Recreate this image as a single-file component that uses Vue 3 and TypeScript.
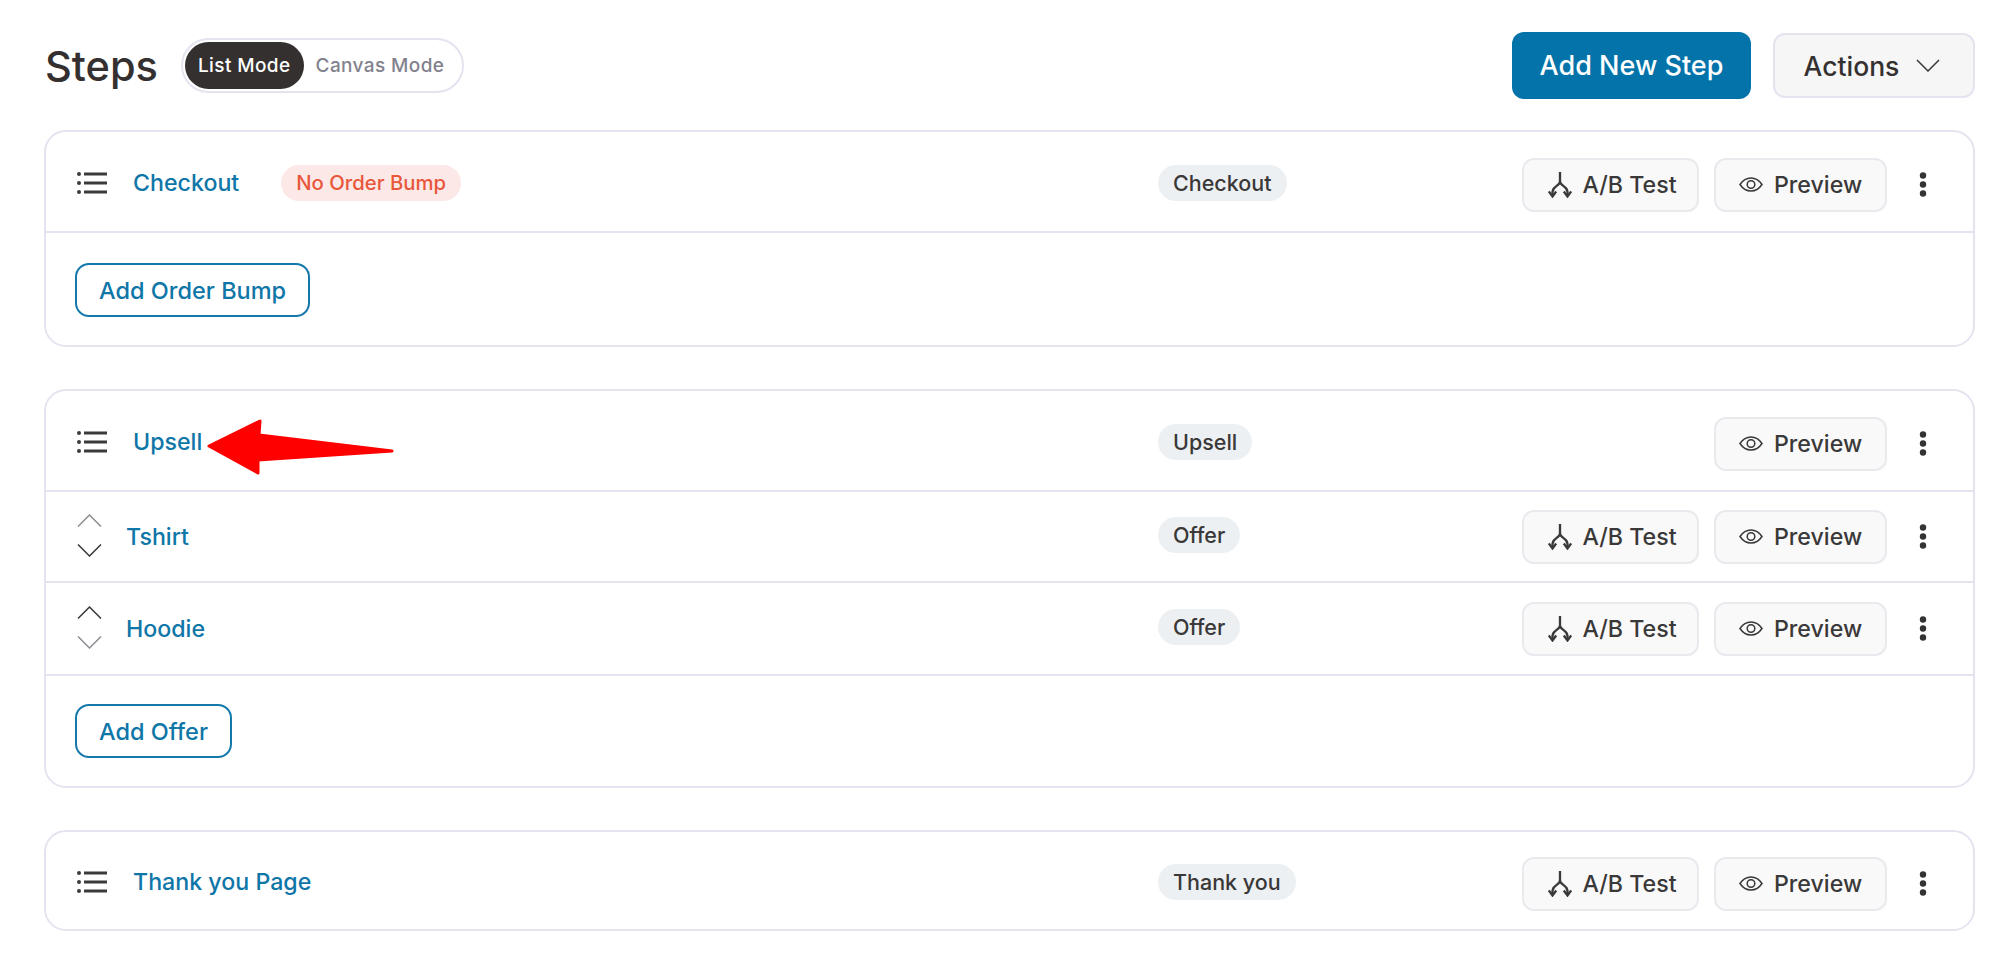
<script setup lang="ts">
interface Row {
  name: string
  type: string
  ab: boolean
  alert?: string
  up?: boolean
}
interface Card {
  head: Row
  subs: Row[]
  footer?: string
  tight?: boolean
}

const cards: Card[] = [
  {
    head: { name: 'Checkout', type: 'Checkout', ab: true, alert: 'No Order Bump' },
    subs: [],
    footer: 'Add Order Bump',
  },
  {
    head: { name: 'Upsell', type: 'Upsell', ab: false },
    subs: [
      { name: 'Tshirt', type: 'Offer', ab: true, up: false },
      { name: 'Hoodie', type: 'Offer', ab: true, up: true },
    ],
    footer: 'Add Offer',
    tight: true,
  },
  {
    head: { name: 'Thank you Page', type: 'Thank you', ab: true },
    subs: [],
  },
]
</script>

<template>
  <div class="page">
    <header class="toolbar">
      <h1 class="title">Steps</h1>
      <div class="toggle">
        <span class="mode active">List Mode</span>
        <span class="mode">Canvas Mode</span>
      </div>
      <div class="spacer"></div>
      <button class="primary">Add New Step</button>
      <button class="actions">
        Actions
        <svg class="actions-chev" viewBox="0 0 24 13" fill="none">
          <path d="M1 1l11 11L23 1" stroke="#3a3838" stroke-width="1.5" />
        </svg>
      </button>
    </header>

    <section v-for="card in cards" :key="card.head.name" class="card">
      <div class="row head" :class="{ last: !card.subs.length && !card.footer }">
        <div class="main">
          <svg class="list-icon" viewBox="0 0 30 22" fill="none">
            <circle cx="2" cy="2" r="2" fill="#3d3a3a" />
            <circle cx="2" cy="11" r="2" fill="#3d3a3a" />
            <circle cx="2" cy="20" r="2" fill="#3d3a3a" />
            <path d="M7 2h23M7 11h23M7 20h23" stroke="#3d3a3a" stroke-width="2.8" />
          </svg>
          <a class="name">{{ card.head.name }}</a>
          <span v-if="card.head.alert" class="alert">{{ card.head.alert }}</span>
        </div>
        <span class="type">{{ card.head.type }}</span>
        <div class="btns">
          <button v-if="card.head.ab" class="ghost ab">
            <svg class="ab-icon" viewBox="0 0 24 26" fill="none" stroke="#3a3838" stroke-width="2.300">
              <path d="M12 0v9.500C12 14 4.500 14 4.500 20v4M12 9.500C12 14 19.500 14 19.500 20v4" />
              <path d="M.8 19.500l3.700 5 3.700-5M15.800 19.500l3.700 5 3.700-5" />
            </svg>
            A/B Test
          </button>
          <button class="ghost pv">
            <svg class="eye" viewBox="0 0 24 15" fill="none" stroke="#3a3838" stroke-width="1.500">
              <path d="M1 7.500C4 3 8 1 12 1s8 2 11 6.500C20 12 16 14 12 14s-8-2-11-6.500z" />
              <circle cx="12" cy="7.500" r="3.800" />
            </svg>
            Preview
          </button>
          <svg class="dots" viewBox="0 0 8 25" fill="#353333">
            <circle cx="4" cy="3.500" r="3.200" />
            <circle cx="4" cy="12.500" r="3.200" />
            <circle cx="4" cy="21.500" r="3.200" />
          </svg>
        </div>
      </div>

      <div v-for="(sub, i) in card.subs" :key="sub.name" class="row sub" :class="{ second: i === 1 }">
        <div class="main">
          <div class="sort">
            <svg viewBox="0 0 25 13" fill="none" :class="{ on: sub.up }">
              <path d="M1 12.500L12.500 1 24 12.500" stroke-width="1.500" />
            </svg>
            <svg viewBox="0 0 25 13" fill="none" :class="{ on: !sub.up }">
              <path d="M1 .5L12.500 12 24 .5" stroke-width="1.500" />
            </svg>
          </div>
          <a class="name">{{ sub.name }}</a>
        </div>
        <span class="type">{{ sub.type }}</span>
        <div class="btns">
          <button class="ghost ab">
            <svg class="ab-icon" viewBox="0 0 24 26" fill="none" stroke="#3a3838" stroke-width="2.300">
              <path d="M12 0v9.500C12 14 4.500 14 4.500 20v4M12 9.500C12 14 19.500 14 19.500 20v4" />
              <path d="M.8 19.500l3.700 5 3.700-5M15.800 19.500l3.700 5 3.700-5" />
            </svg>
            A/B Test
          </button>
          <button class="ghost pv">
            <svg class="eye" viewBox="0 0 24 15" fill="none" stroke="#3a3838" stroke-width="1.500">
              <path d="M1 7.500C4 3 8 1 12 1s8 2 11 6.500C20 12 16 14 12 14s-8-2-11-6.500z" />
              <circle cx="12" cy="7.500" r="3.800" />
            </svg>
            Preview
          </button>
          <svg class="dots" viewBox="0 0 8 25" fill="#353333">
            <circle cx="4" cy="3.500" r="3.200" />
            <circle cx="4" cy="12.500" r="3.200" />
            <circle cx="4" cy="21.500" r="3.200" />
          </svg>
        </div>
      </div>

      <div v-if="card.footer" class="footer" :class="{ tight: card.tight }">
        <button class="outline">{{ card.footer }}</button>
      </div>
    </section>

    <svg class="arrow" viewBox="0 0 190 58" fill="#ff0000" stroke="#ff0000" stroke-width="3" stroke-linejoin="round">
      <path d="M4 28L55 3 54 17 187 33 53 42 53 55z" />
    </svg>
  </div>
</template>

<style scoped>
.page {
  position: relative;
  box-sizing: border-box;
  width: 1999px;
  height: 958px;
  padding: 32px 24px 0 44px;
  background: #fff;
  font-family: Inter, "Liberation Sans", sans-serif;
  color: #3a3838;
  overflow: hidden;
}
button {
  font-family: inherit;
  cursor: pointer;
}
.toolbar {
  display: flex;
  align-items: center;
  height: 67px;
  margin-bottom: 31px;
}
.title {
  margin: 1px 23px 0 1px;
  font-size: 41.500px;
  font-weight: 500;
  color: #353030;
}
.toggle {
  display: flex;
  align-items: center;
  box-sizing: border-box;
  height: 55px;
  width: 283px;
  padding: 0 3px 0 2px;
  border: 2px solid #e4e4f0;
  border-radius: 28px;
}
.mode {
  padding: 0 12px;
  font-size: 19px;
  font-weight: 500;
  letter-spacing: 0.4px;
  color: #82828e;
  white-space: nowrap;
}
.mode.active {
  display: flex;
  align-items: center;
  height: 47px;
  padding: 0 13px;
  background: #353030;
  color: #fff;
  border-radius: 24px;
}
.spacer {
  flex: 1;
}
.primary {
  width: 239px;
  height: 67px;
  border: none;
  border-radius: 12px;
  background: #0473aa;
  color: #fff;
  font-size: 27px;
  font-weight: 500;
}
.actions {
  display: flex;
  align-items: center;
  justify-content: center;
  gap: 17px;
  box-sizing: border-box;
  width: 202px;
  height: 65px;
  margin-left: 22px;
  padding: 0 4px 0 0;
  background: #f6f6f7;
  border: 2px solid #e4e4f0;
  border-radius: 12px;
  color: #353030;
  font-size: 26.500px;
  font-weight: 500;
}
.actions-chev {
  width: 24px;
  height: 13px;
}
.card {
  border: 2px solid #e4e4f0;
  border-radius: 22px;
  margin-bottom: 42px;
}
.row {
  display: grid;
  grid-template-columns: 1081px 1fr auto;
  align-items: center;
  padding: 0 46px 0 31px;
}
.head {
  box-sizing: border-box;
  height: 101px;
  padding-top: 6px;
  border-bottom: 2px solid #e4e4f0;
}
.head.last {
  height: 97px;
  border-bottom: none;
}
.sub {
  height: 89px;
  border-bottom: 2px solid #e4e4f0;
}
.sub.second {
  height: 91px;
}
.main {
  display: flex;
  align-items: center;
}
.head .main {
  margin-bottom: 3px;
}
.list-icon {
  width: 30px;
  height: 22px;
  margin-right: 26px;
}
.name {
  font-size: 23.200px;
  font-weight: 500;
  color: #0f76a8;
}
.alert {
  margin-left: 42px;
  height: 36px;
  line-height: 36px;
  padding: 0 15px;
  border-radius: 18px;
  background: #fde8e8;
  color: #e8573a;
  font-size: 20.300px;
  font-weight: 500;
}
.sort {
  display: flex;
  flex-direction: column;
  gap: 17px;
  width: 25px;
  margin: 0 24px 2px 0;
}
.sort svg {
  display: block;
  width: 25px;
  height: 13px;
  stroke: #8e8e94;
}
.sort svg.on {
  stroke: #3a3838;
}
.type {
  justify-self: start;
  height: 36px;
  line-height: 36px;
  margin-bottom: 3px;
  padding: 0 15px;
  border-radius: 18px;
  background: #edf0f2;
  color: #3a3838;
  font-size: 21.500px;
  font-weight: 500;
}
.btns {
  display: flex;
  align-items: center;
}
.ghost {
  display: flex;
  align-items: center;
  justify-content: center;
  box-sizing: border-box;
  height: 54px;
  background: #f9f9fa;
  border: 2px solid #e9e9ee;
  border-radius: 12px;
  color: #3a3838;
  font-size: 23.200px;
  font-weight: 500;
}
.ab {
  width: 177px;
  gap: 10px;
  margin-right: 15px;
  padding: 0 0 0 4px;
}
.pv {
  width: 173px;
  gap: 11px;
  padding: 0;
}
.ab-icon {
  width: 24px;
  height: 26px;
}
.eye {
  width: 24px;
  height: 15px;
}
.dots {
  width: 8px;
  height: 25px;
  margin-left: 32px;
}
.footer {
  padding: 30px 32px 28px 29px;
}
.footer.tight {
  padding-top: 28px;
}
.outline {
  box-sizing: border-box;
  height: 54px;
  padding: 0 22px;
  background: #fff;
  border: 2px solid #1478ab;
  border-radius: 14px;
  color: #0f76a8;
  font-size: 23.500px;
  font-weight: 500;
}
.arrow {
  position: absolute;
  left: 205px;
  top: 418px;
  width: 190px;
  height: 58px;
}
</style>
